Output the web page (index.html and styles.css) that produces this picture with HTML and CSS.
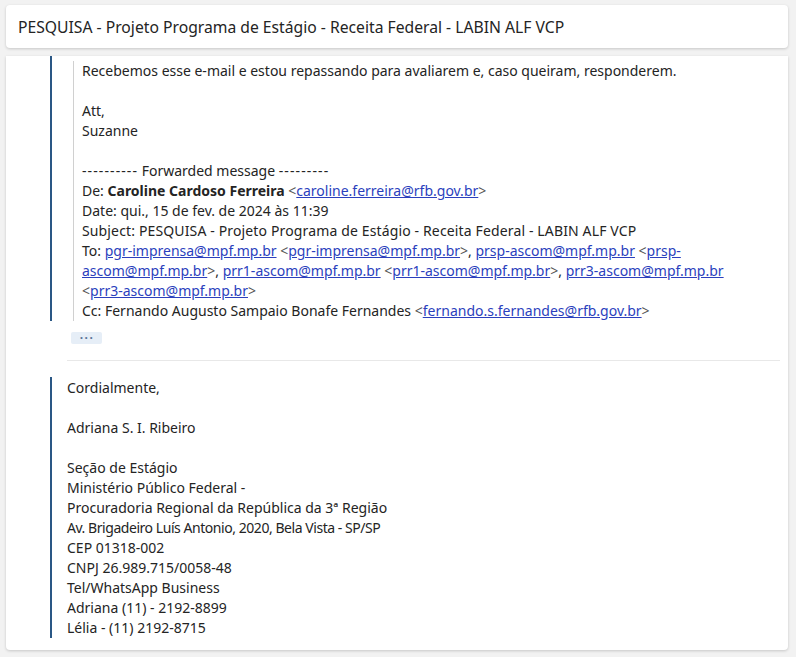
FILE: index.html
```html
<!DOCTYPE html>
<html lang="pt">
<head>
<meta charset="utf-8">
<title>PESQUISA</title>
<link rel="stylesheet" href="styles.css">
</head>
<body>
<div class="page">
  <div class="subject-bar">PESQUISA - Projeto Programa de Estágio - Receita Federal - LABIN ALF VCP</div>
  <div class="card">
    <div class="quote">
      <div class="inner">
        <div class="line">Recebemos esse e-mail e estou repassando para avaliarem e, caso queiram, responderem.</div>
        <div class="line">&nbsp;</div>
        <div class="line">Att,</div>
        <div class="line">Suzanne</div>
        <div class="line">&nbsp;</div>
        <div class="line"><span class="dash">----------</span> Forwarded message <span class="dash">---------</span></div>
        <div class="line">De: <b>Caroline Cardoso Ferreira</b> <span class="lt">&lt;</span><a href="#">caroline.ferreira@rfb.gov.br</a><span class="lt">&gt;</span></div>
        <div class="line">Date: qui., 15 de fev. de 2024 às 11:39</div>
        <div class="line wide">Subject: PESQUISA - Projeto Programa de Estágio - Receita Federal - LABIN ALF VCP</div>
        <div class="line">To: <a href="#">pgr-imprensa@mpf.mp.br</a> <span class="lt">&lt;</span><a href="#">pgr-imprensa@mpf.mp.br</a><span class="lt">&gt;</span>, <a href="#">prsp-ascom@mpf.mp.br</a> <span class="lt">&lt;</span><a href="#">prsp-<br>ascom@mpf.mp.br</a><span class="lt">&gt;</span>, <a href="#">prr1-ascom@mpf.mp.br</a> <span class="lt">&lt;</span><a href="#">prr1-ascom@mpf.mp.br</a><span class="lt">&gt;</span>, <a href="#">prr3-ascom@mpf.mp.br</a><br><span class="lt">&lt;</span><a href="#">prr3-ascom@mpf.mp.br</a><span class="lt">&gt;</span></div>
        <div class="line">Cc: Fernando Augusto Sampaio Bonafe Fernandes <span class="lt">&lt;</span><a href="#">fernando.s.fernandes@rfb.gov.br</a><span class="lt">&gt;</span></div>
      </div>
    </div>
    <div class="more-row"><button class="more" type="button">···</button></div>
    <div class="sep"></div>
    <div class="quote sig">
      <div class="line">Cordialmente,</div>
      <div class="line">&nbsp;</div>
      <div class="line">Adriana S. I. Ribeiro</div>
      <div class="line">&nbsp;</div>
      <div class="line">Seção de Estágio</div>
      <div class="line">Ministério Público Federal -</div>
      <div class="line">Procuradoria Regional da República da 3ª Região</div>
      <div class="line narrow">Av. Brigadeiro Luís Antonio, 2020, Bela Vista - SP/SP</div>
      <div class="line">CEP 01318-002</div>
      <div class="line">CNPJ 26.989.715/0058-48</div>
      <div class="line">Tel/WhatsApp Business</div>
      <div class="line">Adriana (11) - 2192-8899</div>
      <div class="line">Lélia - (11) 2192-8715</div>
    </div>
  </div>
</div>
</body>
</html>
```
FILE: styles.css
```css
html, body {
  margin: 0;
  padding: 0;
}
body {
  background: #f2f2f2;
  font-family: "Noto Sans", "Open Sans", sans-serif;
  color: #242424;
  width: 796px;
  height: 657px;
  overflow: hidden;
}
.page {
  padding: 5px 8px 0 6px;
}
.subject-bar {
  height: 43px;
  line-height: 44px;
  background: #fff;
  border-radius: 4px;
  box-shadow: 0 1px 3px rgba(0, 0, 0, 0.18);
  padding-left: 12px;
  font-size: 15.7px;
  color: #242424;
}
.card {
  margin-top: 8px;
  background: #fff;
  border-radius: 0 0 4px 4px;
  box-shadow: 0 1px 3px rgba(0, 0, 0, 0.18);
  padding: 0 8px 12px 44px;
  font-size: 14px;
  line-height: 20px;
}
.quote {
  border-left: 2px solid #2a5785;
  padding: 5px 0 0 21px;
}
.quote .inner {
  border-left: 1px solid #d0d0d0;
  padding-left: 8px;
}
.line {
  white-space: nowrap;
}
.dash {
  letter-spacing: 1.1px;
}
.wide {
  letter-spacing: 0.14px;
}
.narrow {
  letter-spacing: -0.45px;
}
.lt {
  color: #555;
}
a {
  color: #2b3fbd;
  text-decoration: underline;
}
.more-row {
  padding: 11px 0 0 21px;
  height: 13px;
}
.more {
  display: block;
  width: 31px;
  height: 12px;
  padding: 0 0 0 1px;
  border: none;
  border-radius: 2px;
  background: #e6eef7;
  color: #5a7498;
  font-size: 12px;
  font-weight: bold;
  line-height: 10px;
  letter-spacing: 1.5px;
  font-family: "Noto Sans", sans-serif;
}
.sep {
  margin: 15px 0 0 17px;
  border-top: 1px solid #e8e8e8;
}
.quote.sig {
  margin-top: 16px;
  padding: 1px 0 0 15px;
}
```
